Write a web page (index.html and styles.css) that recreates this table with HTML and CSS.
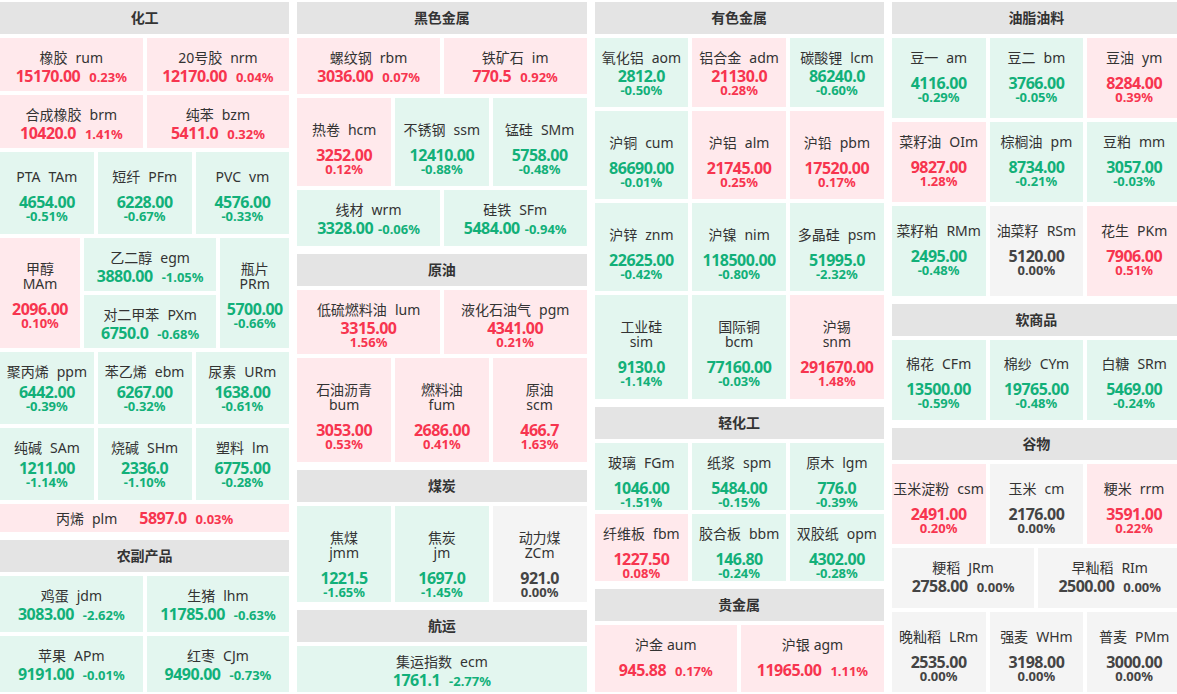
FILE: index.html
```html
<!DOCTYPE html>
<html lang="zh">
<head>
<meta charset="utf-8">
<title>期货行情</title>
<link rel="stylesheet" href="styles.css">
</head>
<body>
<div class="board">

  <!-- Column 1 -->
  <div class="col">
    <section class="sec">
      <div class="sec-h">化工</div>
      <div class="row h53">
        <div class="cell up"><div class="nm">橡胶<span class="cd">rum</span></div><div class="vl"><span class="px">15170.00</span><span class="pc">0.23%</span></div></div>
        <div class="cell up"><div class="nm">20号胶<span class="cd">nrm</span></div><div class="vl"><span class="px">12170.00</span><span class="pc">0.04%</span></div></div>
      </div>
      <div class="row h53">
        <div class="cell up"><div class="nm">合成橡胶<span class="cd">brm</span></div><div class="vl"><span class="px">10420.0</span><span class="pc">1.41%</span></div></div>
        <div class="cell up"><div class="nm">纯苯<span class="cd">bzm</span></div><div class="vl"><span class="px">5411.0</span><span class="pc">0.32%</span></div></div>
      </div>
      <div class="row h82">
        <div class="cell dn st g10 p17"><div class="nm">PTA<span class="cd">TAm</span></div><div class="vl"><span class="px">4654.00</span><span class="pc">-0.51%</span></div></div>
        <div class="cell dn st g10 p17"><div class="nm">短纤<span class="cd">PFm</span></div><div class="vl"><span class="px">6228.00</span><span class="pc">-0.67%</span></div></div>
        <div class="cell dn st g10 p17"><div class="nm">PVC<span class="cd">vm</span></div><div class="vl"><span class="px">4576.00</span><span class="pc">-0.33%</span></div></div>
      </div>
      <div class="row h110">
        <div class="cell up st g10 wrap p23 w80"><div class="nm">甲醇<span class="cd">MAm</span></div><div class="vl"><span class="px">2096.00</span><span class="pc">0.10%</span></div></div>
        <div class="stack">
          <div class="cell dn"><div class="nm">乙二醇<span class="cd">egm</span></div><div class="vl"><span class="px">3880.00</span><span class="pc">-1.05%</span></div></div>
          <div class="cell dn"><div class="nm">对二甲苯<span class="cd">PXm</span></div><div class="vl"><span class="px">6750.0</span><span class="pc">-0.68%</span></div></div>
        </div>
        <div class="cell dn st g10 wrap p23 w69"><div class="nm">瓶片<span class="cd">PRm</span></div><div class="vl"><span class="px">5700.00</span><span class="pc">-0.66%</span></div></div>
      </div>
      <div class="row h72">
        <div class="cell dn st g5"><div class="nm">聚丙烯<span class="cd">ppm</span></div><div class="vl"><span class="px">6442.00</span><span class="pc">-0.39%</span></div></div>
        <div class="cell dn st g5"><div class="nm">苯乙烯<span class="cd">ebm</span></div><div class="vl"><span class="px">6267.00</span><span class="pc">-0.32%</span></div></div>
        <div class="cell dn st g5"><div class="nm">尿素<span class="cd">URm</span></div><div class="vl"><span class="px">1638.00</span><span class="pc">-0.61%</span></div></div>
      </div>
      <div class="row h72">
        <div class="cell dn st g5"><div class="nm">纯碱<span class="cd">SAm</span></div><div class="vl"><span class="px">1211.00</span><span class="pc">-1.14%</span></div></div>
        <div class="cell dn st g5"><div class="nm">烧碱<span class="cd">SHm</span></div><div class="vl"><span class="px">2336.0</span><span class="pc">-1.10%</span></div></div>
        <div class="cell dn st g5"><div class="nm">塑料<span class="cd">lm</span></div><div class="vl"><span class="px">6775.00</span><span class="pc">-0.28%</span></div></div>
      </div>
      <div class="row h28">
        <div class="cell up one"><div class="nm">丙烯<span class="cd">plm</span></div><div class="vl"><span class="px">5897.0</span><span class="pc">0.03%</span></div></div>
      </div>
    </section>
    <section class="sec">
      <div class="sec-h">农副产品</div>
      <div class="row h56">
        <div class="cell dn"><div class="nm">鸡蛋<span class="cd">jdm</span></div><div class="vl"><span class="px">3083.00</span><span class="pc">-2.62%</span></div></div>
        <div class="cell dn"><div class="nm">生猪<span class="cd">lhm</span></div><div class="vl"><span class="px">11785.00</span><span class="pc">-0.63%</span></div></div>
      </div>
      <div class="row h56">
        <div class="cell dn"><div class="nm">苹果<span class="cd">APm</span></div><div class="vl"><span class="px">9191.00</span><span class="pc">-0.01%</span></div></div>
        <div class="cell dn"><div class="nm">红枣<span class="cd">CJm</span></div><div class="vl"><span class="px">9490.00</span><span class="pc">-0.73%</span></div></div>
      </div>
    </section>
  </div>

  <!-- Column 2 -->
  <div class="col">
    <section class="sec">
      <div class="sec-h">黑色金属</div>
      <div class="row h56">
        <div class="cell up"><div class="nm">螺纹钢<span class="cd">rbm</span></div><div class="vl"><span class="px">3036.00</span><span class="pc">0.07%</span></div></div>
        <div class="cell up"><div class="nm">铁矿石<span class="cd">im</span></div><div class="vl"><span class="px">770.5</span><span class="pc">0.92%</span></div></div>
      </div>
      <div class="row h88">
        <div class="cell up st g10 p24"><div class="nm">热卷<span class="cd">hcm</span></div><div class="vl"><span class="px">3252.00</span><span class="pc">0.12%</span></div></div>
        <div class="cell dn st g10 p24"><div class="nm">不锈钢<span class="cd">ssm</span></div><div class="vl"><span class="px">12410.00</span><span class="pc">-0.88%</span></div></div>
        <div class="cell dn st g10 p24"><div class="nm">锰硅<span class="cd">SMm</span></div><div class="vl"><span class="px">5758.00</span><span class="pc">-0.48%</span></div></div>
      </div>
      <div class="row h56">
        <div class="cell dn tight"><div class="nm">线材<span class="cd">wrm</span></div><div class="vl"><span class="px">3328.00</span><span class="pc">-0.06%</span></div></div>
        <div class="cell dn tight"><div class="nm">硅铁<span class="cd">SFm</span></div><div class="vl"><span class="px">5484.00</span><span class="pc">-0.94%</span></div></div>
      </div>
    </section>
    <section class="sec">
      <div class="sec-h">原油</div>
      <div class="row h64">
        <div class="cell up st"><div class="nm">低硫燃料油<span class="cd">lum</span></div><div class="vl"><span class="px">3315.00</span><span class="pc">1.56%</span></div></div>
        <div class="cell up st"><div class="nm">液化石油气<span class="cd">pgm</span></div><div class="vl"><span class="px">4341.00</span><span class="pc">0.21%</span></div></div>
      </div>
      <div class="row h104">
        <div class="cell up st g10 wrap p24"><div class="nm">石油沥青<span class="cd">bum</span></div><div class="vl"><span class="px">3053.00</span><span class="pc">0.53%</span></div></div>
        <div class="cell up st g10 wrap p24"><div class="nm">燃料油<span class="cd">fum</span></div><div class="vl"><span class="px">2686.00</span><span class="pc">0.41%</span></div></div>
        <div class="cell up st g10 wrap p24"><div class="nm">原油<span class="cd">scm</span></div><div class="vl"><span class="px">466.7</span><span class="pc">1.63%</span></div></div>
      </div>
    </section>
    <section class="sec">
      <div class="sec-h">煤炭</div>
      <div class="row h96">
        <div class="cell dn st g10 wrap p24"><div class="nm">焦煤<span class="cd">jmm</span></div><div class="vl"><span class="px">1221.5</span><span class="pc">-1.65%</span></div></div>
        <div class="cell dn st g10 wrap p24"><div class="nm">焦炭<span class="cd">jm</span></div><div class="vl"><span class="px">1697.0</span><span class="pc">-1.45%</span></div></div>
        <div class="cell fl st g10 wrap p24"><div class="nm">动力煤<span class="cd">ZCm</span></div><div class="vl"><span class="px">921.0</span><span class="pc">0.00%</span></div></div>
      </div>
    </section>
    <section class="sec">
      <div class="sec-h">航运</div>
      <div class="row h46">
        <div class="cell dn p8"><div class="nm">集运指数<span class="cd">ecm</span></div><div class="vl"><span class="px">1761.1</span><span class="pc">-2.77%</span></div></div>
      </div>
    </section>
  </div>

  <!-- Column 3 -->
  <div class="col">
    <section class="sec">
      <div class="sec-h">有色金属</div>
      <div class="row h69">
        <div class="cell dn st"><div class="nm">氧化铝<span class="cd">aom</span></div><div class="vl"><span class="px">2812.0</span><span class="pc">-0.50%</span></div></div>
        <div class="cell up st"><div class="nm">铝合金<span class="cd">adm</span></div><div class="vl"><span class="px">21130.0</span><span class="pc">0.28%</span></div></div>
        <div class="cell dn st"><div class="nm">碳酸锂<span class="cd">lcm</span></div><div class="vl"><span class="px">86240.0</span><span class="pc">-0.60%</span></div></div>
      </div>
      <div class="row h88">
        <div class="cell dn st g10 p24"><div class="nm">沪铜<span class="cd">cum</span></div><div class="vl"><span class="px">86690.00</span><span class="pc">-0.01%</span></div></div>
        <div class="cell up st g10 p24"><div class="nm">沪铝<span class="cd">alm</span></div><div class="vl"><span class="px">21745.00</span><span class="pc">0.25%</span></div></div>
        <div class="cell up st g10 p24"><div class="nm">沪铅<span class="cd">pbm</span></div><div class="vl"><span class="px">17520.00</span><span class="pc">0.17%</span></div></div>
      </div>
      <div class="row h88">
        <div class="cell dn st g10 p24"><div class="nm">沪锌<span class="cd">znm</span></div><div class="vl"><span class="px">22625.00</span><span class="pc">-0.42%</span></div></div>
        <div class="cell dn st g10 p24"><div class="nm">沪镍<span class="cd">nim</span></div><div class="vl"><span class="px">118500.00</span><span class="pc">-0.80%</span></div></div>
        <div class="cell dn st g10 p24"><div class="nm">多晶硅<span class="cd">psm</span></div><div class="vl"><span class="px">51995.0</span><span class="pc">-2.32%</span></div></div>
      </div>
      <div class="row h104">
        <div class="cell dn st g10 wrap p24"><div class="nm">工业硅<span class="cd">sim</span></div><div class="vl"><span class="px">9130.0</span><span class="pc">-1.14%</span></div></div>
        <div class="cell dn st g10 wrap p24"><div class="nm">国际铜<span class="cd">bcm</span></div><div class="vl"><span class="px">77160.00</span><span class="pc">-0.03%</span></div></div>
        <div class="cell up st g10 wrap p24"><div class="nm">沪锡<span class="cd">snm</span></div><div class="vl"><span class="px">291670.00</span><span class="pc">1.48%</span></div></div>
      </div>
    </section>
    <section class="sec">
      <div class="sec-h">轻化工</div>
      <div class="row h67">
        <div class="cell dn st g10"><div class="nm">玻璃<span class="cd">FGm</span></div><div class="vl"><span class="px">1046.00</span><span class="pc">-1.51%</span></div></div>
        <div class="cell dn st g10"><div class="nm">纸浆<span class="cd">spm</span></div><div class="vl"><span class="px">5484.00</span><span class="pc">-0.15%</span></div></div>
        <div class="cell dn st g10"><div class="nm">原木<span class="cd">lgm</span></div><div class="vl"><span class="px">776.0</span><span class="pc">-0.39%</span></div></div>
      </div>
      <div class="row h67">
        <div class="cell up st g10"><div class="nm">纤维板<span class="cd">fbm</span></div><div class="vl"><span class="px">1227.50</span><span class="pc">0.08%</span></div></div>
        <div class="cell dn st g10"><div class="nm">胶合板<span class="cd">bbm</span></div><div class="vl"><span class="px">146.80</span><span class="pc">-0.24%</span></div></div>
        <div class="cell dn st g10"><div class="nm">双胶纸<span class="cd">opm</span></div><div class="vl"><span class="px">4302.00</span><span class="pc">-0.28%</span></div></div>
      </div>
    </section>
    <section class="sec">
      <div class="sec-h">贵金属</div>
      <div class="row h67">
        <div class="cell up g10 sp1"><div class="nm">沪金<span class="cd">aum</span></div><div class="vl"><span class="px">945.88</span><span class="pc">0.17%</span></div></div>
        <div class="cell up g10 sp1"><div class="nm">沪银<span class="cd">agm</span></div><div class="vl"><span class="px">11965.00</span><span class="pc">1.11%</span></div></div>
      </div>
    </section>
  </div>

  <!-- Column 4 -->
  <div class="col">
    <section class="sec">
      <div class="sec-h">油脂油料</div>
      <div class="row h80">
        <div class="cell dn st g10"><div class="nm">豆一<span class="cd">am</span></div><div class="vl"><span class="px">4116.00</span><span class="pc">-0.29%</span></div></div>
        <div class="cell dn st g10"><div class="nm">豆二<span class="cd">bm</span></div><div class="vl"><span class="px">3766.00</span><span class="pc">-0.05%</span></div></div>
        <div class="cell up st g10"><div class="nm">豆油<span class="cd">ym</span></div><div class="vl"><span class="px">8284.00</span><span class="pc">0.39%</span></div></div>
      </div>
      <div class="row h80">
        <div class="cell up st g10"><div class="nm">菜籽油<span class="cd">OIm</span></div><div class="vl"><span class="px">9827.00</span><span class="pc">1.28%</span></div></div>
        <div class="cell dn st g10"><div class="nm">棕榈油<span class="cd">pm</span></div><div class="vl"><span class="px">8734.00</span><span class="pc">-0.21%</span></div></div>
        <div class="cell dn st g10"><div class="nm">豆粕<span class="cd">mm</span></div><div class="vl"><span class="px">3057.00</span><span class="pc">-0.03%</span></div></div>
      </div>
      <div class="row h90">
        <div class="cell dn st g10 p17"><div class="nm">菜籽粕<span class="cd">RMm</span></div><div class="vl"><span class="px">2495.00</span><span class="pc">-0.48%</span></div></div>
        <div class="cell fl st g10 p17"><div class="nm">油菜籽<span class="cd">RSm</span></div><div class="vl"><span class="px">5120.00</span><span class="pc">0.00%</span></div></div>
        <div class="cell up st g10 p17"><div class="nm">花生<span class="cd">PKm</span></div><div class="vl"><span class="px">7906.00</span><span class="pc">0.51%</span></div></div>
      </div>
    </section>
    <section class="sec">
      <div class="sec-h">软商品</div>
      <div class="row h80">
        <div class="cell dn st g10 p16"><div class="nm">棉花<span class="cd">CFm</span></div><div class="vl"><span class="px">13500.00</span><span class="pc">-0.59%</span></div></div>
        <div class="cell dn st g10 p16"><div class="nm">棉纱<span class="cd">CYm</span></div><div class="vl"><span class="px">19765.00</span><span class="pc">-0.48%</span></div></div>
        <div class="cell dn st g10 p16"><div class="nm">白糖<span class="cd">SRm</span></div><div class="vl"><span class="px">5469.00</span><span class="pc">-0.24%</span></div></div>
      </div>
    </section>
    <section class="sec">
      <div class="sec-h">谷物</div>
      <div class="row h80">
        <div class="cell up st g10 p17"><div class="nm">玉米淀粉<span class="cd">csm</span></div><div class="vl"><span class="px">2491.00</span><span class="pc">0.20%</span></div></div>
        <div class="cell fl st g10 p17"><div class="nm">玉米<span class="cd">cm</span></div><div class="vl"><span class="px">2176.00</span><span class="pc">0.00%</span></div></div>
        <div class="cell up st g10 p17"><div class="nm">粳米<span class="cd">rrm</span></div><div class="vl"><span class="px">3591.00</span><span class="pc">0.22%</span></div></div>
      </div>
      <div class="row h60">
        <div class="cell fl"><div class="nm">粳稻<span class="cd">JRm</span></div><div class="vl"><span class="px">2758.00</span><span class="pc">0.00%</span></div></div>
        <div class="cell fl"><div class="nm">早籼稻<span class="cd">RIm</span></div><div class="vl"><span class="px">2500.00</span><span class="pc">0.00%</span></div></div>
      </div>
      <div class="row h80">
        <div class="cell fl st g10 p17"><div class="nm">晚籼稻<span class="cd">LRm</span></div><div class="vl"><span class="px">2535.00</span><span class="pc">0.00%</span></div></div>
        <div class="cell fl st g10 p17"><div class="nm">强麦<span class="cd">WHm</span></div><div class="vl"><span class="px">3198.00</span><span class="pc">0.00%</span></div></div>
        <div class="cell fl st g10 p17"><div class="nm">普麦<span class="cd">PMm</span></div><div class="vl"><span class="px">3000.00</span><span class="pc">0.00%</span></div></div>
      </div>
    </section>
  </div>

</div>
</body>
</html>
```
FILE: styles.css
```css
html, body {
  margin: 0;
  padding: 0;
  background: #ffffff;
  overflow: hidden;
}

body {
  font-family: "Noto Sans", "Noto Sans CJK SC", sans-serif;
  color: #333333;
}

.board {
  width: 1181px;
  display: grid;
  grid-template-columns: repeat(4, 289.25px);
  column-gap: 8px;
  padding-top: 2px;
}

.col {
  display: flex;
  flex-direction: column;
  gap: 8px;
}

.sec {
  display: flex;
  flex-direction: column;
  gap: 4px;
}

.sec-h {
  height: 32px;
  background: #e4e4e4;
  font-size: 14px;
  font-weight: 700;
  line-height: 32px;
  text-align: center;
  color: #333333;
}

.row {
  display: flex;
  gap: 4px;
}

.h28 { height: 28px; }
.h46 { height: 46px; }
.h53 { height: 53px; }
.h56 { height: 56px; }
.h60 { height: 60px; }
.h64 { height: 64px; }
.h67 { height: 67px; }
.h69 { height: 69px; }
.h72 { height: 72px; }
.h80 { height: 80px; }
.h82 { height: 82px; }
.h88 { height: 88px; }
.h90 { height: 90px; }
.h96 { height: 96px; }
.h104 { height: 104px; }
.h110 { height: 110px; }

.stack {
  flex: 1;
  display: flex;
  flex-direction: column;
  gap: 4px;
  min-width: 0;
}

.cell {
  flex: 1;
  min-width: 0;
  display: flex;
  flex-direction: column;
  align-items: center;
  justify-content: flex-start;
  padding-top: 12px;
  box-sizing: border-box;
  text-align: center;
}

.w80 { flex: 0 0 80px; }
.w69 { flex: 0 0 69px; }

.p8 { padding-top: 8px; }
.p16 { padding-top: 16px; }
.p17 { padding-top: 17px; }
.p23 { padding-top: 23px; }
.p24 { padding-top: 24px; }

.up { background: #ffe9ec; }
.dn { background: #e3f6ef; }
.fl { background: #f4f4f4; }

.up .px, .up .pc { color: #f7354f; }
.dn .px, .dn .pc { color: #12b079; }
.fl .px, .fl .pc { color: #444444; }

.nm {
  font-size: 14px;
  line-height: 15px;
  color: #333333;
  white-space: nowrap;
}

.cd {
  margin-left: 8px;
}

.sp1 .cd {
  margin-left: 4px;
}

.wrap .nm .cd {
  display: block;
  margin-left: 0;
}

.vl {
  display: flex;
  justify-content: center;
  align-items: baseline;
  gap: 9px;
  margin-top: 3px;
  white-space: nowrap;
}

.st .vl {
  flex-direction: column;
  align-items: center;
  gap: 0;
}

.g5 .vl { margin-top: 5px; }
.g10 .vl { margin-top: 10px; }

.tight .vl { gap: 5px; }

.px {
  font-size: 16px;
  line-height: 16px;
  font-weight: 700;
  letter-spacing: -0.5px;
}

.pc {
  font-size: 13px;
  line-height: 13px;
  font-weight: 700;
}

.one {
  flex-direction: row;
  justify-content: center;
  align-items: center;
  padding-top: 0;
}

.one .vl {
  margin-top: 0;
  margin-left: 22px;
}
```
